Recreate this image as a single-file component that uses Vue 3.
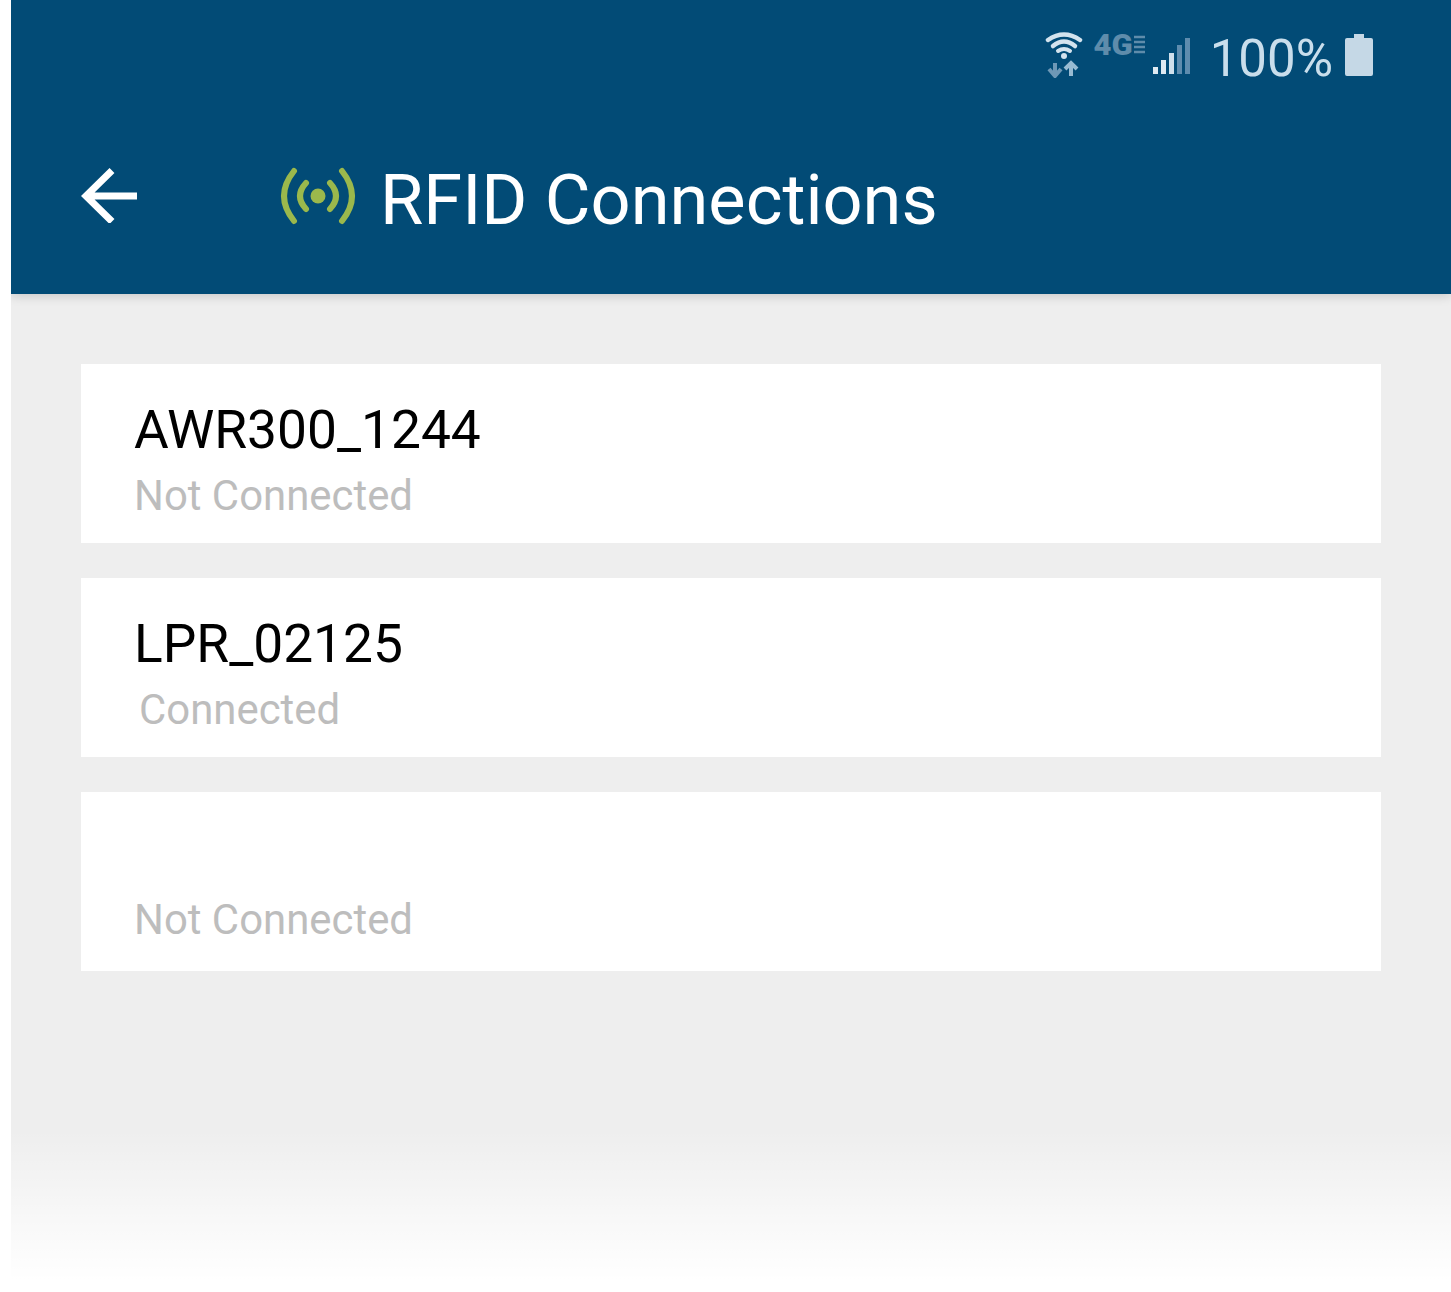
<template>
  <div class="screen">
    <header class="app-header">
      <div class="status-bar">
        <!-- wifi with up/down arrows -->
        <svg class="ic-wifi" width="40" height="48" viewBox="0 0 40 48">
          <g fill="none" stroke="#d3e3ee" stroke-linecap="round">
            <path d="M3 10 Q19 -1 35 10" stroke-width="4.5" />
            <path d="M8 16 Q19 7 30 16" stroke-width="4.5" />
            <path d="M13 21 Q19 17 25 21" stroke-width="4" />
          </g>
          <circle cx="19" cy="26" r="3" fill="#d3e3ee" />
          <g fill="none" stroke="#6f98b6" stroke-width="4">
            <path d="M10 46 V33 M4 39 L10 46 L16 39" />
          </g>
          <g fill="none" stroke="#98bbd2" stroke-width="4">
            <path d="M26 46 V33 M20 39 L26 33 L32 39" />
          </g>
        </svg>
        <span class="net-type">
          <span class="net-4g">4G</span>
          <svg width="11" height="20" viewBox="0 0 11 20">
            <path d="M0 2 H11 M0 7 H11 M0 12 H11 M0 17 H11" stroke="#5f8cab" stroke-width="2.6" />
          </svg>
        </span>
        <svg class="ic-signal" width="38" height="40" viewBox="0 0 38 40">
          <rect x="0" y="31" width="5" height="7" fill="#dfeaf2" />
          <rect x="8" y="24" width="5" height="14" fill="#dfeaf2" />
          <rect x="16" y="17" width="5" height="21" fill="#cfe0ec" />
          <rect x="24" y="9" width="5" height="29" fill="#5e8cae" />
          <rect x="32" y="2" width="5" height="36" fill="#5e8cae" />
        </svg>
        <span class="battery-text">100%</span>
        <svg class="ic-battery" width="28" height="42" viewBox="0 0 28 42">
          <path d="M9 0 H19 V4 H26 Q28 4 28 6 V40 Q28 42 26 42 H2 Q0 42 0 40 V6 Q0 4 2 4 H9 Z" fill="#c5d8e6" />
        </svg>
      </div>
      <div class="toolbar">
        <svg class="ic-back" width="58" height="56" viewBox="0 0 58 56">
          <path d="M31 3.5 L5 29 L31 54.5 M5 29 H56" fill="none" stroke="#fff" stroke-width="7" />
        </svg>
        <svg class="ic-rfid" width="76" height="58" viewBox="0 0 76 58">
          <g fill="none" stroke="#9bb84c" stroke-width="6" stroke-linecap="round">
            <path d="M14 4 Q-6 29 14 54" />
            <path d="M62 4 Q82 29 62 54" />
            <path d="M26 16 Q14 29 26 42" />
            <path d="M50 16 Q62 29 50 42" />
          </g>
          <circle cx="38" cy="29" r="7.5" fill="#9bb84c" />
        </svg>
        <h1 class="title">RFID Connections</h1>
      </div>
    </header>

    <main class="content">
      <div v-for="reader in readers" :key="reader.id" class="card">
        <div class="name" :class="{ blank: !reader.name }">{{ reader.name }}</div>
        <div class="state" :class="{ shifted: reader.connected }">
          {{ reader.connected ? "Connected" : "Not Connected" }}
        </div>
      </div>
    </main>
    <div class="fade"></div>
  </div>
</template>

<script setup>
const readers = [
  { id: 1, name: "AWR300_1244", connected: false },
  { id: 2, name: "LPR_02125", connected: true },
  { id: 3, name: "", connected: false },
];
</script>

<style>
html,
body {
  background: #fff;
}
</style>

<style scoped>
.screen {
  margin-left: 11px;
  height: 1280px;
  display: flex;
  flex-direction: column;
  font-family: Roboto, "Liberation Sans", sans-serif;
  overflow: hidden;
}

.app-header {
  height: 294px;
  flex-shrink: 0;
  background: #024b76;
  box-shadow: 0 2px 10px rgba(0, 0, 0, 0.16);
  position: relative;
  z-index: 1;
}

.status-bar {
  height: 112px;
  display: flex;
  align-items: flex-start;
  justify-content: flex-end;
  padding-right: 78px;
  padding-top: 30px;
  box-sizing: border-box;
}

.ic-wifi {
  margin-right: 11px;
}

.net-type {
  display: flex;
  align-items: center;
  gap: 1px;
  height: 30px;
  margin-right: 8px;
}

.net-4g {
  font-size: 29px;
  font-weight: 900;
  color: #5f8cab;
  line-height: 30px;
  transform: scaleX(1.07);
  transform-origin: right center;
}

.ic-signal {
  margin-top: 6px;
  margin-right: 19px;
}

.battery-text {
  font-size: 51px;
  line-height: 56px;
  color: #c9deec;
  margin-top: 1px;
  margin-right: 12px;
}

.ic-battery {
  margin-top: 4px;
}

.toolbar {
  display: flex;
  align-items: flex-start;
  padding-left: 70px;
  padding-top: 55px;
}

.ic-back {
  margin-right: 141px;
}

.ic-rfid {
  margin-right: 24px;
}

.title {
  margin: -6px 0 0;
  font-size: 70.3px;
  font-weight: 400;
  line-height: 78px;
  color: #fff;
}

.content {
  flex: 1;
  background: #eeeeee;
  padding: 70px 70px 0;
  display: flex;
  flex-direction: column;
  gap: 35px;
}

.card {
  width: 1300px;
  height: 179px;
  background: #fff;
  box-sizing: border-box;
  padding: 36px 53px 0;
}

.name {
  height: 60px;
  font-size: 53.3px;
  line-height: 60px;
  color: #000;
}

.name.blank {
  height: 56px;
}

.state {
  margin-top: 10px;
  font-size: 41.9px;
  line-height: 52px;
  color: #bdbdbd;
}

.shifted {
  padding-left: 5px;
}

.fade {
  position: absolute;
  left: 11px;
  right: 0;
  top: 1130px;
  height: 150px;
  background: linear-gradient(rgba(255, 255, 255, 0), #fff);
}
</style>
